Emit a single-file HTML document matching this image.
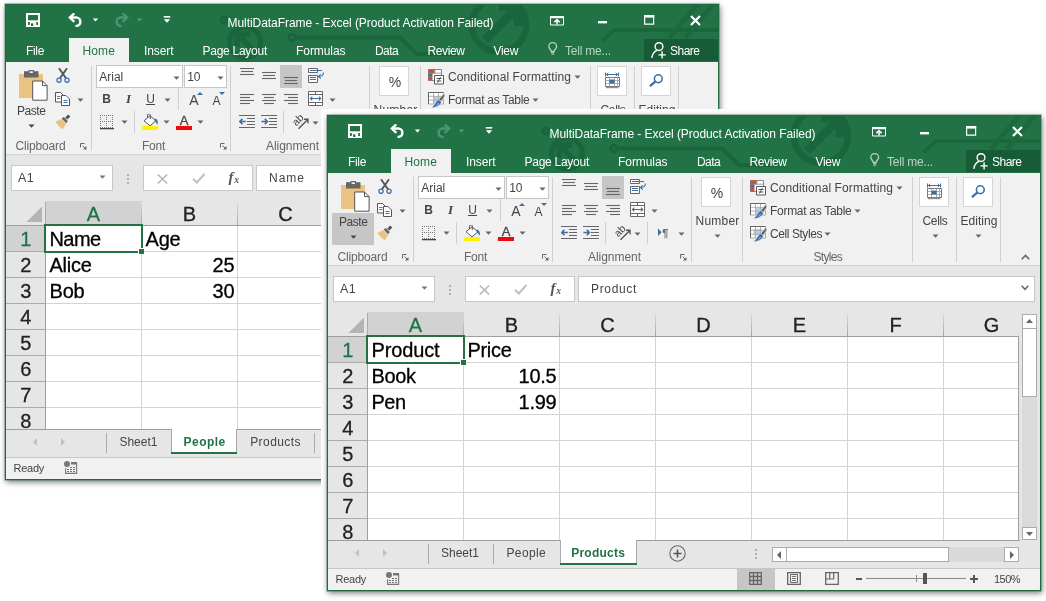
<!DOCTYPE html>
<html lang="en"><head><meta charset="utf-8"><title>MultiDataFrame - Excel</title>
<style>
html,body{margin:0;padding:0;background:#fff;}
body{width:1046px;height:601px;position:relative;overflow:hidden;}
.win{position:absolute;width:714px;height:476px;overflow:hidden;will-change:transform;}
.sh{position:absolute;width:714px;height:476px;box-shadow:0 0 0 1px rgba(40,105,70,.3),1px 2px 6px 0 rgba(0,0,0,.55);}
.win i,.win span,.win svg{position:absolute;display:block;}
.win .t{font-family:"Liberation Sans","DejaVu Sans",sans-serif;white-space:nowrap;}
.win .a{font-family:"Liberation Sans",sans-serif;white-space:nowrap;-webkit-text-stroke:.3px currentColor;}
.win .s{font-family:"Liberation Serif",serif;white-space:nowrap;}
.win .c{text-align:center;}
.bd{position:absolute;left:0;top:0;width:712px;height:474px;border:1px solid #1f6a40;pointer-events:none;}
#patch{position:absolute;left:321px;top:109px;width:725px;height:492px;background:#fff;overflow:hidden;}
</style></head><body>
<div class="sh" style="left:5px;top:4px"></div>
<div class="win" style="left:5px;top:4px"><i style="left:0px;top:0px;width:714px;height:58px;background:#217346;"></i>
<svg style="left:0px;top:0px" width="714" height="58" viewBox="0 0 714 58"><g fill="none" stroke="#1b653c"><circle cx="240" cy="38.500" r="15.500" stroke-width="5"/><path d="M250 48L233 31M232 43V30h13" stroke-width="5.500"/><circle cx="219" cy="16" r="3" stroke-width="3"/><circle cx="287" cy="33.500" r="3.200" stroke-width="3"/><path d="M290.500 33.500H395L412 50H452" stroke-width="4"/><circle cx="494" cy="21" r="27" stroke-width="6.500"/><path d="M480 36L511 5M494 3h19v19" stroke-width="8.500"/><path d="M597 37L609 26H713" stroke-width="3.500"/><path d="M693 0L664 34M708 0L680 34" stroke-width="5" stroke="#1d683e"/></g></svg>
<i style="left:64px;top:34px;width:60px;height:24px;background:#f1f1f1;"></i>
<i style="left:639px;top:35px;width:74px;height:22px;background:#185c37;"></i>
<svg style="left:21px;top:9px" width="14" height="14" viewBox="0 0 14 14"><path d="M1 1h12v12H1z" fill="none" stroke="#fff" stroke-width="2"/><path d="M1 7.300h12V9H1z" fill="#fff"/><path d="M3.800 9h6.400v4H3.800z" fill="#fff"/><path d="M5 10.300h2.300V13H5z" fill="#217346"/></svg>
<svg style="left:63px;top:9px" width="16" height="14" viewBox="0 0 16 14"><path d="M2 4.5h7a4.3 4.3 0 0 1 0 8.4H7.5" fill="none" stroke="#fff" stroke-width="2.3"/><path d="M6.3 0.3L1.8 4.6 6.3 8.9" fill="none" stroke="#fff" stroke-width="2.3"/></svg>
<svg style="left:86.5px;top:13.5px" width="7" height="4" viewBox="0 0 7 4"><path d="M0.80 0.500h5.4L3.500 3.50z" fill="#fff"/></svg>
<svg style="left:108px;top:9px" width="16" height="14" viewBox="0 0 16 14"><path d="M14 4.5H7a4.3 4.3 0 0 0 0 8.4h1.5" fill="none" stroke="#4f9470" stroke-width="2.3"/><path d="M9.7 0.3l4.5 4.3-4.5 4.3" fill="none" stroke="#4f9470" stroke-width="2.3"/></svg>
<svg style="left:130.5px;top:13.5px" width="7" height="4" viewBox="0 0 7 4"><path d="M0.80 0.500h5.4L3.500 3.50z" fill="#5a9a76"/></svg>
<svg style="left:158px;top:12px" width="8" height="8" viewBox="0 0 8 8"><path d="M0.800 0h6.400v1.600h-6.400z" fill="#fff"/><path d="M0.800 3.300h6.400L4 6.800z" fill="#fff"/></svg>
<span class="t" style="left:222.50px;top:11.00px;font-size:12px;line-height:16px;color:#fff;letter-spacing:-0.055px;">MultiDataFrame - Excel (Product Activation Failed)</span>
<svg style="left:545px;top:11.5px" width="14" height="10" viewBox="0 0 14 10"><path d="M0.500 0.500h13v8.500h-13z" fill="none" stroke="#fff"/><path d="M0 0h14v2.200H0z" fill="#fff"/><path d="M7 4v4.500M4.300 6.300l2.700-2.700L9.700 6.300" fill="none" stroke="#fff" stroke-width="1.500"/></svg>
<svg style="left:593px;top:17px" width="9" height="3" viewBox="0 0 9 3"><path d="M0 0h9v2.4H0z" fill="#fff"/></svg>
<svg style="left:638.5px;top:11px" width="11" height="10" viewBox="0 0 11 10"><path d="M0.6 0.6h9v8.6h-9z" fill="none" stroke="#fff" stroke-width="1.2"/><path d="M0 0h10.2v2.6H0z" fill="#fff"/></svg>
<svg style="left:685px;top:11px" width="11" height="11" viewBox="0 0 11 11"><path d="M1 1l9 9M10 1l-9 9" stroke="#fff" stroke-width="2.2" fill="none"/></svg>
<span class="t" style="left:21.00px;top:38.80px;font-size:12px;line-height:16px;color:#fff;letter-spacing:-0.336px;">File</span>
<span class="t" style="left:77.50px;top:38.80px;font-size:12px;line-height:16px;color:#217346;letter-spacing:0.121px;">Home</span>
<span class="t" style="left:139.00px;top:38.80px;font-size:12px;line-height:16px;color:#fff;letter-spacing:-0.086px;">Insert</span>
<span class="t" style="left:197.50px;top:38.80px;font-size:12px;line-height:16px;color:#fff;letter-spacing:-0.263px;">Page Layout</span>
<span class="t" style="left:291.00px;top:38.80px;font-size:12px;line-height:16px;color:#fff;letter-spacing:-0.064px;">Formulas</span>
<span class="t" style="left:370.00px;top:38.80px;font-size:12px;line-height:16px;color:#fff;letter-spacing:-0.590px;">Data</span>
<span class="t" style="left:422.50px;top:38.80px;font-size:12px;line-height:16px;color:#fff;letter-spacing:-0.393px;">Review</span>
<span class="t" style="left:488.50px;top:38.80px;font-size:12px;line-height:16px;color:#fff;letter-spacing:-0.324px;">View</span>
<span class="t" style="left:560.00px;top:38.80px;font-size:12px;line-height:16px;color:#b5d6c3;letter-spacing:-0.202px;">Tell me...</span>
<span class="t" style="left:665.00px;top:38.80px;font-size:12px;line-height:16px;color:#fff;letter-spacing:-0.506px;">Share</span>
<svg style="left:543px;top:38px" width="10" height="13" viewBox="0 0 10 13"><path d="M3.300 9.400C3.100 7.600 0.800 6.700 0.800 4.400a3.900 3.900 0 0 1 7.800 0c0 2.300-2.300 3.200-2.500 5z" fill="none" stroke="#a9cfb9" stroke-width="1.400"/><path d="M3 10.400h3.400M3.300 12.100h2.800" stroke="#a9cfb9" stroke-width="1.200"/></svg>
<svg style="left:646px;top:38px" width="16" height="17" viewBox="0 0 16 17"><circle cx="8" cy="4.6" r="3.9" fill="none" stroke="#fff" stroke-width="1.4"/><path d="M0.8 15.8C1.6 11.4 3.8 9.2 6 8.4" fill="none" stroke="#fff" stroke-width="1.4"/><path d="M7.5 12.9h7.2M11.1 9.3v7.2" stroke="#fff" stroke-width="1.4"/></svg>
<i style="left:1px;top:58px;width:712px;height:92px;background:#f1f1f1;"></i>
<i style="left:1px;top:150px;width:712px;height:1px;background:#d2d2d2;"></i>
<i style="left:86px;top:62px;width:1px;height:85px;background:#d0d0d0;"></i>
<i style="left:225px;top:62px;width:1px;height:85px;background:#d0d0d0;"></i>
<i style="left:364px;top:62px;width:1px;height:85px;background:#d0d0d0;"></i>
<i style="left:415px;top:62px;width:1px;height:85px;background:#d0d0d0;"></i>
<i style="left:585px;top:62px;width:1px;height:85px;background:#d0d0d0;"></i>
<i style="left:629px;top:62px;width:1px;height:85px;background:#d0d0d0;"></i>
<i style="left:673px;top:62px;width:1px;height:85px;background:#d0d0d0;"></i>
<i style="left:173px;top:84px;width:1px;height:22px;background:#d0d0d0;"></i>
<i style="left:129px;top:107px;width:1px;height:22px;background:#d0d0d0;"></i>
<i style="left:278px;top:107px;width:1px;height:22px;background:#d0d0d0;"></i>
<i style="left:320px;top:107px;width:1px;height:22px;background:#d0d0d0;"></i>
<svg style="left:13px;top:66px" width="31" height="32" viewBox="0 0 31 32"><path d="M1 4h24v24H1z" fill="#eac282"/><path d="M6 1.2h14.5V7.5H6z" fill="#666"/><path d="M10.5 0h5.5v3.2h-5.5z" fill="#666"/><path d="M11.6 1.3h3.3v1.7h-3.3z" fill="#f1f1f1"/><path d="M14.7 11h9.8l4.6 4.6v14.6H14.7z" fill="#fff" stroke="#555" stroke-width="1"/><path d="M24.5 11v4.6h4.6" fill="none" stroke="#555" stroke-width="1"/></svg>
<span class="t" style="left:12.00px;top:99.00px;font-size:12px;line-height:16px;color:#444;letter-spacing:-0.438px;">Paste</span>
<svg style="left:22.5px;top:120px" width="7" height="4" viewBox="0 0 7 4"><path d="M0.50 0.500h6L3.500 3.80z" fill="#444"/></svg>
<svg style="left:51px;top:64px" width="14" height="15" viewBox="0 0 14 15"><path d="M3 0.300L10 10.200M11 0.300L4 10.200" stroke="#555" stroke-width="1.900" fill="none"/><circle cx="3" cy="12.300" r="2.100" fill="none" stroke="#3a6ea5" stroke-width="1.300"/><circle cx="11" cy="12.300" r="2.100" fill="none" stroke="#3a6ea5" stroke-width="1.300"/></svg>
<svg style="left:50px;top:88px" width="15" height="14" viewBox="0 0 15 14"><path d="M0.500 0.500h5l2.500 2.500v7h-7.500z" fill="#fff" stroke="#555"/><path d="M2 4.500h3.500M2 6.500h3.500" stroke="#666" stroke-width=".9"/><path d="M6.500 3.500h4.500l3.500 3.500v6.500h-8z" fill="#fff" stroke="#555"/><path d="M8.500 8.500h4M8.500 10.500h4" stroke="#3a6ea5" stroke-width="1"/></svg>
<svg style="left:71.5px;top:93.5px" width="7" height="4" viewBox="0 0 7 4"><path d="M0.50 0.500h6L3.500 3.80z" fill="#666"/></svg>
<svg style="left:50px;top:110px" width="16" height="16" viewBox="0 0 16 16"><path d="M10.2 3.4l3-3 2.2 2.2-3 3z" fill="#555"/><path d="M6.6 4.6l2.2-1.6 4 4-1.6 2.2z" fill="#666"/><path d="M0.4 8l5.8-3 5 5-3.6 5.6C5 13.400 2.600 10.800 0.400 8z" fill="#eac282"/></svg>
<span class="t" style="left:10.50px;top:134.00px;font-size:12px;line-height:16px;color:#666;letter-spacing:-0.153px;">Clipboard</span>
<svg style="left:75px;top:139px" width="7" height="7" viewBox="0 0 7 7"><path d="M0.5 4.5v-4h4" fill="none" stroke="#666"/><path d="M2.6 2.6l3.4 3.4" stroke="#666" stroke-width="1"/><path d="M6.5 3v3.5H3z" fill="#666"/></svg>
<i style="left:91px;top:61px;width:87px;height:23px;background:#fff;border:1px solid #c6c6c6;box-sizing:border-box;"></i>
<i style="left:179px;top:61px;width:43px;height:23px;background:#fff;border:1px solid #c6c6c6;box-sizing:border-box;"></i>
<span class="t" style="left:94.30px;top:65.00px;font-size:12px;line-height:16px;color:#444;letter-spacing:-0.003px;">Arial</span>
<svg style="left:167.5px;top:71.5px" width="7" height="4" viewBox="0 0 7 4"><path d="M0.50 0.500h6L3.500 3.80z" fill="#666"/></svg>
<span class="t" style="left:182.30px;top:65.00px;font-size:12px;line-height:16px;color:#444;letter-spacing:-0.330px;">10</span>
<svg style="left:211.5px;top:71.5px" width="7" height="4" viewBox="0 0 7 4"><path d="M0.50 0.500h6L3.500 3.80z" fill="#666"/></svg>
<span class="t c" style="left:41.50px;width:120px;top:86.50px;font-size:12px;line-height:16px;color:#444;font-weight:bold;">B</span>
<span class="s c" style="left:63.50px;width:120px;top:86.00px;font-size:13px;line-height:17px;color:#444;font-weight:bold;font-style:italic;">I</span>
<span class="t c" style="left:85.50px;width:120px;top:86.50px;font-size:12px;line-height:16px;color:#444;">U</span>
<i style="left:141px;top:100px;width:9px;height:1px;background:#444;"></i>
<svg style="left:159.0px;top:94px" width="7" height="4" viewBox="0 0 7 4"><path d="M0.50 0.500h6L3.500 3.80z" fill="#666"/></svg>
<span class="t c" style="left:129.00px;width:120px;top:87.00px;font-size:14px;line-height:18px;color:#444;">A</span>
<span class="t c" style="left:151.50px;width:120px;top:88.50px;font-size:12px;line-height:16px;color:#444;">A</span>
<svg style="left:191.5px;top:88px" width="6" height="3" viewBox="0 0 6 3"><path d="M0 3h6L3 0z" fill="#3a6ea5"/></svg>
<svg style="left:213.5px;top:88px" width="6" height="3" viewBox="0 0 6 3"><path d="M0 0h6L3 3z" fill="#3a6ea5"/></svg>
<svg style="left:95px;top:111px" width="14" height="15" viewBox="0 0 14 15"><path d="M0 0h1v1h-1zM0 0h1v1h-1zM0 6h1v1h-1zM6 0h1v1h-1zM0 12h1v1h-1zM12 0h1v1h-1zM2 0h1v1h-1zM0 2h1v1h-1zM2 6h1v1h-1zM6 2h1v1h-1zM2 12h1v1h-1zM12 2h1v1h-1zM4 0h1v1h-1zM0 4h1v1h-1zM4 6h1v1h-1zM6 4h1v1h-1zM4 12h1v1h-1zM12 4h1v1h-1zM6 0h1v1h-1zM0 6h1v1h-1zM6 6h1v1h-1zM6 6h1v1h-1zM6 12h1v1h-1zM12 6h1v1h-1zM8 0h1v1h-1zM0 8h1v1h-1zM8 6h1v1h-1zM6 8h1v1h-1zM8 12h1v1h-1zM12 8h1v1h-1zM10 0h1v1h-1zM0 10h1v1h-1zM10 6h1v1h-1zM6 10h1v1h-1zM10 12h1v1h-1zM12 10h1v1h-1zM12 0h1v1h-1zM0 12h1v1h-1zM12 6h1v1h-1zM6 12h1v1h-1zM12 12h1v1h-1zM12 12h1v1h-1z" fill="#777"/><path d="M0 13h14v1.300H0z" fill="#444"/></svg>
<svg style="left:115.5px;top:116px" width="7" height="4" viewBox="0 0 7 4"><path d="M0.50 0.500h6L3.500 3.80z" fill="#666"/></svg>
<svg style="left:138px;top:110px" width="16" height="13" viewBox="0 0 16 13"><path d="M7 1.800L13 6.800 7 11.800 1 6.800z" fill="#fff" stroke="#555" stroke-width="1"/><path d="M4.500 4V1.200a1.400 1.400 0 0 1 2.800 0v4" fill="none" stroke="#555" stroke-width="1"/><path d="M12 4.600c2.300.8 3.500 3 2.600 6.200-1.300-1.400-1.700-3.200-3.400-4.600z" fill="#3a6ea5"/></svg>
<i style="left:137px;top:122px;width:16px;height:4px;background:#fff200;"></i>
<svg style="left:158.0px;top:116px" width="7" height="4" viewBox="0 0 7 4"><path d="M0.50 0.500h6L3.500 3.80z" fill="#666"/></svg>
<span class="t c" style="left:119.20px;width:120px;top:108.00px;font-size:13px;line-height:17px;color:#444;-webkit-text-stroke:.3px #444;">A</span>
<i style="left:171px;top:122px;width:16px;height:4px;background:#ee0a0a;"></i>
<svg style="left:192.0px;top:116px" width="7" height="4" viewBox="0 0 7 4"><path d="M0.50 0.500h6L3.500 3.80z" fill="#666"/></svg>
<span class="t" style="left:137.00px;top:134.00px;font-size:12px;line-height:16px;color:#666;letter-spacing:-0.254px;">Font</span>
<svg style="left:215px;top:139px" width="7" height="7" viewBox="0 0 7 7"><path d="M0.5 4.5v-4h4" fill="none" stroke="#666"/><path d="M2.6 2.6l3.4 3.4" stroke="#666" stroke-width="1"/><path d="M6.5 3v3.5H3z" fill="#666"/></svg>
<i style="left:275px;top:61px;width:22px;height:23px;background:#c6c6c6;"></i>
<svg style="left:235px;top:64px" width="14" height="17" viewBox="0 0 14 17"><path d="M0 0.5h14" stroke="#666" stroke-width="1.100"/><path d="M1 3.5h12" stroke="#666" stroke-width="1.100"/><path d="M0 6.5h14" stroke="#666" stroke-width="1.100"/></svg>
<svg style="left:257px;top:64px" width="14" height="17" viewBox="0 0 14 17"><path d="M0 4.5h14" stroke="#666" stroke-width="1.100"/><path d="M1 7.5h12" stroke="#666" stroke-width="1.100"/><path d="M0 10.5h14" stroke="#666" stroke-width="1.100"/></svg>
<svg style="left:279px;top:64px" width="14" height="17" viewBox="0 0 14 17"><path d="M0 9.5h14" stroke="#666" stroke-width="1.100"/><path d="M1 12.5h12" stroke="#666" stroke-width="1.100"/><path d="M0 15.5h14" stroke="#666" stroke-width="1.100"/></svg>
<svg style="left:303px;top:64px" width="17" height="16" viewBox="0 0 17 16"><path d="M0.500 0.500h9v4h-9z" fill="#fff" stroke="#666"/><path d="M2 2.500h12" stroke="#3a6ea5" stroke-width="1"/><path d="M0.500 7.500h9v7h-9z" fill="#fff" stroke="#666"/><path d="M2 9.500h6M2 11.500h6" stroke="#3a6ea5" stroke-width="1"/><path d="M15.300 4.500c.4 2.600-1.400 3.900-4.300 3.900" fill="none" stroke="#3a6ea5" stroke-width="1.100"/><path d="M12.700 6.300L10.500 8.400l2.200 2.100" fill="none" stroke="#3a6ea5" stroke-width="1.100"/></svg>
<svg style="left:235px;top:88px" width="14" height="14" viewBox="0 0 14 14"><path d="M0 2.5h14" stroke="#666" stroke-width="1.1"/><path d="M0 5.5h10" stroke="#666" stroke-width="1.1"/><path d="M0 8.5h14" stroke="#666" stroke-width="1.1"/><path d="M0 11.5h10" stroke="#666" stroke-width="1.1"/></svg>
<svg style="left:257px;top:88px" width="14" height="14" viewBox="0 0 14 14"><path d="M0 2.5h14" stroke="#666" stroke-width="1.1"/><path d="M2 5.5h10" stroke="#666" stroke-width="1.1"/><path d="M0 8.5h14" stroke="#666" stroke-width="1.1"/><path d="M2 11.5h10" stroke="#666" stroke-width="1.1"/></svg>
<svg style="left:279px;top:88px" width="14" height="14" viewBox="0 0 14 14"><path d="M0 2.5h14" stroke="#666" stroke-width="1.1"/><path d="M4 5.5h10" stroke="#666" stroke-width="1.1"/><path d="M0 8.5h14" stroke="#666" stroke-width="1.1"/><path d="M4 11.5h10" stroke="#666" stroke-width="1.1"/></svg>
<svg style="left:303px;top:87px" width="16" height="16" viewBox="0 0 16 16"><path d="M0.500 0.500h14v14h-14z" fill="#fff" stroke="#666"/><path d="M0.500 3.500h14M0.500 11.500h14M7.500 0.500v3M7.500 11.500v3" stroke="#666" fill="none"/><path d="M2.500 7.500h10.200M4.300 5.700L2.500 7.500l1.800 1.800M10.900 5.700L12.700 7.500l-1.800 1.800" fill="none" stroke="#3a6ea5" stroke-width="1.100"/></svg>
<svg style="left:324.0px;top:94px" width="7" height="4" viewBox="0 0 7 4"><path d="M0.50 0.500h6L3.500 3.80z" fill="#666"/></svg>
<svg style="left:234px;top:111px" width="16" height="14" viewBox="0 0 16 14"><path d="M0 0.500h16M0 12.500h16M8 3.500h8M8 6.500h8M8 9.500h8" stroke="#666" stroke-width="1.1"/><path d="M0.800 6.500h6M3.400 3.800L0.800 6.500l2.600 2.700" fill="none" stroke="#3a6ea5" stroke-width="1.6"/></svg>
<svg style="left:256px;top:111px" width="16" height="14" viewBox="0 0 16 14"><path d="M0 0.500h16M0 12.500h16M8 3.500h8M8 6.500h8M8 9.500h8" stroke="#666" stroke-width="1.1"/><path d="M0.400 6.500h6M3.800 3.800L6.400 6.500 3.800 9.200" fill="none" stroke="#3a6ea5" stroke-width="1.6"/></svg>
<svg style="left:287px;top:111px" width="18" height="16" viewBox="0 0 18 16"><text x="0" y="0" transform="translate(4.200 11.500) rotate(-45)" font-family="Liberation Sans,sans-serif" font-size="10.500" fill="#444">ab</text><path d="M6.500 13.800L15.500 4.800" stroke="#555" stroke-width="1.400"/><path d="M12 4.300h4v4" fill="none" stroke="#555" stroke-width="1.400"/></svg>
<svg style="left:306.5px;top:116.5px" width="7" height="4" viewBox="0 0 7 4"><path d="M0.50 0.500h6L3.500 3.80z" fill="#666"/></svg>
<svg style="left:331px;top:113px" width="13" height="11" viewBox="0 0 13 11"><path d="M0 0.500l3.600 3.700L0 8z" fill="#3a6ea5"/><text x="4.200" y="8.600" font-family="Liberation Sans,sans-serif" font-size="11" font-weight="bold" fill="#666">¶</text></svg>
<svg style="left:350.5px;top:116.5px" width="7" height="4" viewBox="0 0 7 4"><path d="M0.50 0.500h6L3.500 3.80z" fill="#666"/></svg>
<span class="t" style="left:261.00px;top:134.00px;font-size:12px;line-height:16px;color:#666;letter-spacing:-0.042px;">Alignment</span>
<svg style="left:353px;top:139px" width="7" height="7" viewBox="0 0 7 7"><path d="M0.5 4.5v-4h4" fill="none" stroke="#666"/><path d="M2.6 2.6l3.4 3.4" stroke="#666" stroke-width="1"/><path d="M6.5 3v3.5H3z" fill="#666"/></svg>
<i style="left:374px;top:62px;width:30px;height:30px;background:#fff;border:1px solid #d4d4d4;box-sizing:border-box;"></i>
<span class="t c" style="left:330.00px;width:120px;top:68.50px;font-size:14px;line-height:18px;color:#444;">%</span>
<span class="t" style="left:368.50px;top:97.50px;font-size:12px;line-height:16px;color:#444;letter-spacing:0.219px;">Number</span>
<svg style="left:387.0px;top:118.5px" width="7" height="4" viewBox="0 0 7 4"><path d="M0.50 0.500h6L3.500 3.80z" fill="#666"/></svg>
<svg style="left:423px;top:65px" width="16" height="16" viewBox="0 0 16 16"><path d="M0.500 0.500h13v11h-13z" fill="#fff" stroke="#888"/><path d="M0.500 0.500h6v3.700h-6z" fill="#c8502f"/><path d="M0.500 4.200h4v3.600h-4z" fill="#3a6ea5"/><path d="M0.500 7.800h4v3.700h-4z" fill="#c8502f"/><path d="M7 0.500v4M0.500 4.200h13" stroke="#888" stroke-width=".8" fill="none"/><path d="M6.500 6.500h9v8.500h-9z" fill="#fff" stroke="#555"/><path d="M8.500 9.500h5M8.500 12h5M12.500 8l-3 5.500" stroke="#444" stroke-width=".9" fill="none"/></svg>
<svg style="left:423px;top:88px" width="18" height="16" viewBox="0 0 18 16"><path d="M0.500 0.500h15v11.500h-15z" fill="#fff" stroke="#aaa"/><path d="M5.500 4.300h5v7.700h-5zM10.500 4.300h5v3.900h-5z" fill="#b9cde5"/><path d="M0.500 4.300h15M0.500 8.200h15M5.500 0.500v11.500M10.500 0.500v11.500" stroke="#aaa" stroke-width=".9" fill="none"/><path d="M0.500 12V0.500H15.500" fill="none" stroke="#666" stroke-width="1"/><path d="M16.200 1.100L17 4 13.200 9.600 10.600 7.400z" fill="#666" stroke="#f1f1f1" stroke-width=".7"/><path d="M10.700 7.600L13.500 10C12.200 13.600 8 15.600 3.500 15.700 6.500 14 7.400 9.400 10.700 7.600z" fill="#3a6ea5" stroke="#f1f1f1" stroke-width=".5"/><path d="M8.500 13.300c1-.6 1.700-1.400 2.100-2.400" stroke="#cfe0f2" stroke-width=".8" fill="none"/></svg>
<svg style="left:423px;top:111px" width="18" height="16" viewBox="0 0 18 16"><path d="M0.500 0.500h15v11.500h-15z" fill="#fff" stroke="#aaa"/><path d="M3.500 3h8.500v6.500H3.500z" fill="#b9cde5"/><path d="M0.500 4.300h15M0.500 8.200h15M5.500 0.500v11.500M10.500 0.500v11.500" stroke="#aaa" stroke-width=".9" fill="none"/><path d="M0.500 12V0.500H15.500" fill="none" stroke="#666" stroke-width="1"/><path d="M16.200 1.100L17 4 13.200 9.600 10.600 7.400z" fill="#666" stroke="#f1f1f1" stroke-width=".7"/><path d="M10.700 7.600L13.500 10C12.200 13.600 8 15.600 3.500 15.700 6.500 14 7.400 9.400 10.700 7.600z" fill="#3a6ea5" stroke="#f1f1f1" stroke-width=".5"/><path d="M8.500 13.300c1-.6 1.700-1.400 2.100-2.400" stroke="#cfe0f2" stroke-width=".8" fill="none"/></svg>
<span class="t" style="left:443.00px;top:64.50px;font-size:12px;line-height:16px;color:#444;letter-spacing:0.103px;">Conditional Formatting</span>
<svg style="left:568.5px;top:71px" width="7" height="4" viewBox="0 0 7 4"><path d="M0.50 0.500h6L3.500 3.80z" fill="#666"/></svg>
<span class="t" style="left:443.00px;top:87.50px;font-size:12px;line-height:16px;color:#444;letter-spacing:-0.289px;">Format as Table</span>
<svg style="left:526.5px;top:94px" width="7" height="4" viewBox="0 0 7 4"><path d="M0.50 0.500h6L3.500 3.80z" fill="#666"/></svg>
<span class="t" style="left:443.00px;top:111.00px;font-size:12px;line-height:16px;color:#444;letter-spacing:-0.426px;">Cell Styles</span>
<svg style="left:496.5px;top:116.5px" width="7" height="4" viewBox="0 0 7 4"><path d="M0.50 0.500h6L3.500 3.80z" fill="#666"/></svg>
<span class="t" style="left:486.50px;top:134.00px;font-size:12px;line-height:16px;color:#666;letter-spacing:-0.698px;">Styles</span>
<i style="left:592px;top:62px;width:30px;height:30px;background:#fff;border:1px solid #d4d4d4;box-sizing:border-box;"></i>
<svg style="left:600px;top:68px" width="15" height="17" viewBox="0 0 15 17"><path d="M0.500 0.500v4M13.500 0.500v4M1 2.500h12M3.300 0.800L1.500 2.500l1.800 1.700M10.700 0.800L12.500 2.500l-1.800 1.700" fill="none" stroke="#3a6ea5" stroke-width="1"/><path d="M0.500 5.500h14v9h-14z" fill="#fff" stroke="#777"/><path d="M0.500 8.500h14M0.500 11.500h14M4.500 5.500v9M9.500 5.500v9M12.500 5.500v9" stroke="#999" stroke-width=".8" fill="none"/><path d="M4.500 7.500h5v4h-5z" fill="#3a6ea5"/><path d="M1 15.700h5.500v-1M7.500 14.700v1h6" stroke="#777" stroke-width="1" fill="none"/></svg>
<span class="t" style="left:595.50px;top:97.50px;font-size:12px;line-height:16px;color:#444;letter-spacing:-0.334px;">Cells</span>
<svg style="left:604.5px;top:118.5px" width="7" height="4" viewBox="0 0 7 4"><path d="M0.50 0.500h6L3.500 3.80z" fill="#666"/></svg>
<i style="left:636px;top:62px;width:30px;height:30px;background:#fff;border:1px solid #d4d4d4;box-sizing:border-box;"></i>
<svg style="left:644px;top:70px" width="14" height="13" viewBox="0 0 14 13"><circle cx="9.300" cy="4.700" r="3.900" fill="#fff" stroke="#3a6ea5" stroke-width="1.600"/><path d="M6.300 7.700L0.900 12.200" stroke="#3a6ea5" stroke-width="2.200"/></svg>
<span class="t" style="left:633.50px;top:97.50px;font-size:12px;line-height:16px;color:#444;letter-spacing:0.042px;">Editing</span>
<svg style="left:648.0px;top:118.5px" width="7" height="4" viewBox="0 0 7 4"><path d="M0.50 0.500h6L3.500 3.80z" fill="#666"/></svg>
<svg style="left:694px;top:139px" width="9" height="6" viewBox="0 0 9 6"><path d="M0.700 5.300L4.500 1.400 8.300 5.300" fill="none" stroke="#666" stroke-width="1.600"/></svg>
<i style="left:1px;top:151px;width:712px;height:46px;background:#e6e6e6;"></i>
<i style="left:6px;top:161px;width:102px;height:26px;background:#fff;border:1px solid #c8c8c8;box-sizing:border-box;"></i>
<span class="t" style="left:13.00px;top:166.25px;font-size:12.5px;line-height:16.5px;color:#444;letter-spacing:0.352px;">A1</span>
<svg style="left:94.0px;top:171px" width="7" height="4" viewBox="0 0 7 4"><path d="M0.50 0.500h6L3.500 3.80z" fill="#777"/></svg>
<svg style="left:122px;top:169.5px" width="2" height="10" viewBox="0 0 2 10"><path d="M0 0h2v2H0zM0 4h2v2H0zM0 8h2v2H0z" fill="#b0b0b0"/></svg>
<i style="left:138px;top:161px;width:110px;height:26px;background:#fff;border:1px solid #c8c8c8;box-sizing:border-box;"></i>
<svg style="left:151.5px;top:169.5px" width="11" height="10" viewBox="0 0 11 10"><path d="M0.800 0.500l9.400 9M10.200 0.500L0.800 9.500" stroke="#b5b5b5" stroke-width="1.500" fill="none"/></svg>
<svg style="left:187px;top:169px" width="14" height="11" viewBox="0 0 14 11"><path d="M1 5.800l3.800 3.700L12.500 1" stroke="#c2c2c2" stroke-width="2.200" fill="none"/></svg>
<svg style="left:222px;top:166px" width="15" height="17" viewBox="0 0 15 17"><text x="1.500" y="12" font-family="Liberation Serif,serif" font-style="italic" font-weight="bold" font-size="15" fill="#555">f</text><text x="7.200" y="12.500" font-family="Liberation Serif,serif" font-style="italic" font-weight="bold" font-size="9.500" fill="#555">x</text></svg>
<i style="left:251px;top:161px;width:457px;height:26px;background:#fff;border:1px solid #c8c8c8;box-sizing:border-box;"></i>
<span class="t" style="left:264.00px;top:166.00px;font-size:12px;line-height:16px;color:#444;letter-spacing:0.996px;">Name</span>
<svg style="left:694px;top:170px" width="8" height="6" viewBox="0 0 8 6"><path d="M0.700 0.800L4 4.300 7.300 0.800" fill="none" stroke="#666" stroke-width="1.500"/></svg>
<i style="left:1px;top:197px;width:712px;height:228px;background:#e6e6e6;"></i>
<i style="left:41px;top:221px;width:651px;height:204px;background:#fff;"></i>
<i style="left:40px;top:197px;width:97px;height:24px;background:#d2d2d2;"></i>
<i style="left:1px;top:221px;width:39px;height:26px;background:#d2d2d2;"></i>
<svg style="left:20.5px;top:201.5px" width="16.5" height="16.5" viewBox="0 0 16.5 16.5"><path d="M16.500 0v16.500H0z" fill="#b4b4b4"/></svg>
<span class="a c" style="left:28.50px;width:120px;top:198.00px;font-size:20px;line-height:24px;color:#217346;">A</span>
<span class="a c" style="left:124.50px;width:120px;top:198.00px;font-size:20px;line-height:24px;color:#222;">B</span>
<span class="a c" style="left:220.50px;width:120px;top:198.00px;font-size:20px;line-height:24px;color:#222;">C</span>
<span class="a c" style="left:316.50px;width:120px;top:198.00px;font-size:20px;line-height:24px;color:#222;">D</span>
<span class="a c" style="left:412.50px;width:120px;top:198.00px;font-size:20px;line-height:24px;color:#222;">E</span>
<span class="a c" style="left:508.50px;width:120px;top:198.00px;font-size:20px;line-height:24px;color:#222;">F</span>
<span class="a c" style="left:604.50px;width:120px;top:198.00px;font-size:20px;line-height:24px;color:#222;">G</span>
<span class="a c" style="left:-39.20px;width:120px;top:222.50px;font-size:20px;line-height:24px;color:#217346;">1</span>
<span class="a c" style="left:-39.20px;width:120px;top:248.50px;font-size:20px;line-height:24px;color:#222;">2</span>
<span class="a c" style="left:-39.20px;width:120px;top:274.50px;font-size:20px;line-height:24px;color:#222;">3</span>
<span class="a c" style="left:-39.20px;width:120px;top:300.50px;font-size:20px;line-height:24px;color:#222;">4</span>
<span class="a c" style="left:-39.20px;width:120px;top:326.50px;font-size:20px;line-height:24px;color:#222;">5</span>
<span class="a c" style="left:-39.20px;width:120px;top:352.50px;font-size:20px;line-height:24px;color:#222;">6</span>
<span class="a c" style="left:-39.20px;width:120px;top:378.50px;font-size:20px;line-height:24px;color:#222;">7</span>
<span class="a c" style="left:-39.20px;width:120px;top:404.50px;font-size:20px;line-height:24px;color:#222;">8</span>
<i style="left:40px;top:221px;width:1px;height:204px;background:#d4d4d4;"></i>
<i style="left:40px;top:198px;width:1px;height:23px;background:#ababab;"></i>
<i style="left:136px;top:221px;width:1px;height:204px;background:#d4d4d4;"></i>
<i style="left:136px;top:198px;width:1px;height:23px;background:linear-gradient(#dcdcdc,#a6a6a6);"></i>
<i style="left:232px;top:221px;width:1px;height:204px;background:#d4d4d4;"></i>
<i style="left:232px;top:198px;width:1px;height:23px;background:linear-gradient(#dcdcdc,#a6a6a6);"></i>
<i style="left:328px;top:221px;width:1px;height:204px;background:#d4d4d4;"></i>
<i style="left:328px;top:198px;width:1px;height:23px;background:linear-gradient(#dcdcdc,#a6a6a6);"></i>
<i style="left:424px;top:221px;width:1px;height:204px;background:#d4d4d4;"></i>
<i style="left:424px;top:198px;width:1px;height:23px;background:linear-gradient(#dcdcdc,#a6a6a6);"></i>
<i style="left:520px;top:221px;width:1px;height:204px;background:#d4d4d4;"></i>
<i style="left:520px;top:198px;width:1px;height:23px;background:linear-gradient(#dcdcdc,#a6a6a6);"></i>
<i style="left:616px;top:221px;width:1px;height:204px;background:#d4d4d4;"></i>
<i style="left:616px;top:198px;width:1px;height:23px;background:linear-gradient(#dcdcdc,#a6a6a6);"></i>
<i style="left:41px;top:247px;width:651px;height:1px;background:#d4d4d4;"></i>
<i style="left:1px;top:247px;width:39px;height:1px;background:#ababab;"></i>
<i style="left:41px;top:273px;width:651px;height:1px;background:#d4d4d4;"></i>
<i style="left:1px;top:273px;width:39px;height:1px;background:#ababab;"></i>
<i style="left:41px;top:299px;width:651px;height:1px;background:#d4d4d4;"></i>
<i style="left:1px;top:299px;width:39px;height:1px;background:#ababab;"></i>
<i style="left:41px;top:325px;width:651px;height:1px;background:#d4d4d4;"></i>
<i style="left:1px;top:325px;width:39px;height:1px;background:#ababab;"></i>
<i style="left:41px;top:351px;width:651px;height:1px;background:#d4d4d4;"></i>
<i style="left:1px;top:351px;width:39px;height:1px;background:#ababab;"></i>
<i style="left:41px;top:377px;width:651px;height:1px;background:#d4d4d4;"></i>
<i style="left:1px;top:377px;width:39px;height:1px;background:#ababab;"></i>
<i style="left:41px;top:403px;width:651px;height:1px;background:#d4d4d4;"></i>
<i style="left:1px;top:403px;width:39px;height:1px;background:#ababab;"></i>
<i style="left:1px;top:220.5px;width:691px;height:1.0px;background:#9e9e9e;"></i>
<i style="left:40px;top:221px;width:1px;height:204px;background:#9e9e9e;"></i>
<i style="left:691px;top:221px;width:1px;height:204px;background:#9e9e9e;"></i>
<span class="a" style="left:44.50px;top:223.00px;font-size:20px;line-height:24px;color:#000;letter-spacing:-0.590px;">Name</span>
<span class="a" style="left:140.50px;top:223.00px;font-size:20px;line-height:24px;color:#000;letter-spacing:-0.198px;">Age</span>
<span class="a" style="left:44.50px;top:249.00px;font-size:20px;line-height:24px;color:#000;letter-spacing:-0.272px;">Alice</span>
<span class="a" style="left:207.50px;top:249.00px;font-size:20px;line-height:24px;color:#000;letter-spacing:-0.125px;">25</span>
<span class="a" style="left:44.50px;top:275.00px;font-size:20px;line-height:24px;color:#000;letter-spacing:-0.198px;">Bob</span>
<span class="a" style="left:207.50px;top:275.00px;font-size:20px;line-height:24px;color:#000;letter-spacing:-0.125px;">30</span>
<i style="left:39px;top:220px;width:99px;height:29px;border:2px solid #217346;box-sizing:border-box;"></i>
<i style="left:133px;top:244px;width:6px;height:6px;background:#fff;"></i>
<i style="left:134px;top:245px;width:5px;height:5px;background:#217346;"></i>
<i style="left:695px;top:199px;width:15px;height:226px;background:#dadada;"></i>
<i style="left:695px;top:199px;width:15px;height:15px;background:#fff;border:1px solid #ababab;box-sizing:border-box;"></i>
<i style="left:695px;top:214px;width:15px;height:68px;background:#fff;border:1px solid #ababab;border-top:0;box-sizing:border-box;"></i>
<i style="left:695px;top:412px;width:15px;height:13px;background:#fff;border:1px solid #ababab;box-sizing:border-box;"></i>
<svg style="left:699px;top:204px" width="7" height="4" viewBox="0 0 7 4"><path d="M0 4h7L3.500 0z" fill="#666"/></svg>
<svg style="left:699px;top:417px" width="7" height="4" viewBox="0 0 7 4"><path d="M0 0h7L3.500 4z" fill="#666"/></svg>
<i style="left:1px;top:425px;width:712px;height:28px;background:#e6e6e6;"></i>
<i style="left:1px;top:424.5px;width:691.5px;height:1.0px;background:#9e9e9e;"></i>
<svg style="left:28px;top:434px" width="4" height="8" viewBox="0 0 4 8"><path d="M4 0v8L0 4z" fill="#c0c0c0"/></svg>
<svg style="left:56px;top:434px" width="4" height="8" viewBox="0 0 4 8"><path d="M0 0v8l4-4z" fill="#c0c0c0"/></svg>
<i style="left:101px;top:429px;width:1px;height:20px;background:#ababab;"></i>
<span class="t" style="left:114.40px;top:430.00px;font-size:12px;line-height:16px;color:#444;letter-spacing:-0.008px;">Sheet1</span>
<i style="left:166px;top:425px;width:66px;height:23px;background:#fff;border-left:1px solid #ababab;border-right:1px solid #ababab;box-sizing:border-box;"></i>
<i style="left:166px;top:448px;width:66px;height:2px;background:#217346;"></i>
<span class="t" style="left:178.60px;top:430.00px;font-size:12px;line-height:16px;color:#217346;font-weight:bold;letter-spacing:0.440px;">People</span>
<span class="t" style="left:245.20px;top:430.00px;font-size:12px;line-height:16px;color:#444;letter-spacing:0.430px;">Products</span>
<i style="left:309px;top:429px;width:1px;height:20px;background:#ababab;"></i>
<svg style="left:342px;top:430px" width="17" height="17" viewBox="0 0 17 17"><circle cx="8.500" cy="8.500" r="7.700" fill="none" stroke="#666" stroke-width="1.100"/><path d="M4.500 8.500h8M8.500 4.500v8" stroke="#555" stroke-width="1.600"/></svg>
<svg style="left:428px;top:434px" width="2" height="10" viewBox="0 0 2 10"><path d="M0 0h2v2H0zM0 4h2v2H0zM0 8h2v2H0z" fill="#b0b0b0"/></svg>
<i style="left:445px;top:432px;width:15px;height:15px;background:#fff;border:1px solid #ababab;box-sizing:border-box;"></i>
<i style="left:460px;top:432px;width:162px;height:15px;background:#fff;border:1px solid #ababab;border-left:0;box-sizing:border-box;"></i>
<i style="left:622px;top:432px;width:56px;height:15px;background:#d9d9d9;"></i>
<i style="left:677px;top:432px;width:15px;height:15px;background:#fff;border:1px solid #ababab;box-sizing:border-box;"></i>
<svg style="left:450px;top:435.5px" width="4" height="8" viewBox="0 0 4 8"><path d="M4 0v8L0 4z" fill="#666"/></svg>
<svg style="left:683px;top:435.5px" width="4" height="8" viewBox="0 0 4 8"><path d="M0 0v8l4-4z" fill="#666"/></svg>
<i style="left:1px;top:453px;width:712px;height:22px;background:#f1f1f1;"></i>
<i style="left:1px;top:452.5px;width:712px;height:1.0px;background:#c6c6c6;"></i>
<span class="t" style="left:8.50px;top:457.00px;font-size:11px;line-height:15px;color:#444;letter-spacing:-0.259px;">Ready</span>
<svg style="left:59px;top:457px" width="14" height="14" viewBox="0 0 14 14"><circle cx="3" cy="3" r="3" fill="#777"/><path d="M1.600 7.200v5.200h11v-10" fill="none" stroke="#777" stroke-width="1.100"/><path d="M7 1h6.100v2.500H7z" fill="#777"/><path d="M6 6.500h2M9 6.500h2M3 8.500h2M6 8.500h2M9 8.500h2M3 10.500h2M6 10.500h2M9 10.500h2" stroke="#777" stroke-width="1"/></svg>
<i style="left:410px;top:454px;width:38px;height:21px;background:#c6c6c6;"></i>
<svg style="left:422px;top:457px" width="13" height="13" viewBox="0 0 13 13"><path d="M0.700 0.700h11.600v11.600h-11.600zM4.500 0.500v12M8.500 0.500v12M0.500 4.500h12M0.500 8.500h12" fill="none" stroke="#666" stroke-width="1.300"/></svg>
<svg style="left:460px;top:457px" width="14" height="13" viewBox="0 0 14 13"><path d="M0.700 0.700h12.600v11.600h-12.600z" fill="none" stroke="#666" stroke-width="1.300"/><path d="M3.500 2.500h7v8h-7z" fill="none" stroke="#666"/><path d="M5 4.500h4M5 6.500h4M5 8.500h4" stroke="#666" stroke-width=".9"/></svg>
<svg style="left:498px;top:457px" width="14" height="13" viewBox="0 0 14 13"><path d="M0.700 0.700h12.600v11.600h-12.600z" fill="none" stroke="#666" stroke-width="1.300"/><path d="M0.500 7h8.500M4.700 0.500v6.500M8.700 0.500v6.500" fill="none" stroke="#666" stroke-width="1.200"/></svg>
<i style="left:529px;top:463px;width:6px;height:2px;background:#555;"></i>
<i style="left:539px;top:463px;width:100px;height:1px;background:#8a8a8a;"></i>
<i style="left:589px;top:460px;width:1px;height:7px;background:#8a8a8a;"></i>
<i style="left:596px;top:458px;width:4px;height:11px;background:#555;"></i>
<i style="left:643px;top:463px;width:8px;height:2px;background:#555;"></i>
<i style="left:646px;top:460px;width:2px;height:8px;background:#555;"></i>
<span class="t" style="left:667.00px;top:457.00px;font-size:11px;line-height:15px;color:#444;letter-spacing:-0.535px;">150%</span><div class="bd"></div></div>
<div id="patch"><div class="sh" style="left:6px;top:6px"></div><div class="win" style="left:6px;top:6px"><i style="left:0px;top:0px;width:714px;height:58px;background:#217346;"></i>
<svg style="left:0px;top:0px" width="714" height="58" viewBox="0 0 714 58"><g fill="none" stroke="#1b653c"><circle cx="240" cy="38.500" r="15.500" stroke-width="5"/><path d="M250 48L233 31M232 43V30h13" stroke-width="5.500"/><circle cx="219" cy="16" r="3" stroke-width="3"/><circle cx="287" cy="33.500" r="3.200" stroke-width="3"/><path d="M290.500 33.500H395L412 50H452" stroke-width="4"/><circle cx="494" cy="21" r="27" stroke-width="6.500"/><path d="M480 36L511 5M494 3h19v19" stroke-width="8.500"/><path d="M597 37L609 26H713" stroke-width="3.500"/><path d="M693 0L664 34M708 0L680 34" stroke-width="5" stroke="#1d683e"/></g></svg>
<i style="left:64px;top:34px;width:60px;height:24px;background:#f1f1f1;"></i>
<i style="left:639px;top:35px;width:74px;height:22px;background:#185c37;"></i>
<svg style="left:21px;top:9px" width="14" height="14" viewBox="0 0 14 14"><path d="M1 1h12v12H1z" fill="none" stroke="#fff" stroke-width="2"/><path d="M1 7.300h12V9H1z" fill="#fff"/><path d="M3.800 9h6.400v4H3.800z" fill="#fff"/><path d="M5 10.300h2.300V13H5z" fill="#217346"/></svg>
<svg style="left:63px;top:9px" width="16" height="14" viewBox="0 0 16 14"><path d="M2 4.5h7a4.3 4.3 0 0 1 0 8.4H7.5" fill="none" stroke="#fff" stroke-width="2.3"/><path d="M6.3 0.3L1.8 4.6 6.3 8.9" fill="none" stroke="#fff" stroke-width="2.3"/></svg>
<svg style="left:86.5px;top:13.5px" width="7" height="4" viewBox="0 0 7 4"><path d="M0.80 0.500h5.4L3.500 3.50z" fill="#fff"/></svg>
<svg style="left:108px;top:9px" width="16" height="14" viewBox="0 0 16 14"><path d="M14 4.5H7a4.3 4.3 0 0 0 0 8.4h1.5" fill="none" stroke="#4f9470" stroke-width="2.3"/><path d="M9.7 0.3l4.5 4.3-4.5 4.3" fill="none" stroke="#4f9470" stroke-width="2.3"/></svg>
<svg style="left:130.5px;top:13.5px" width="7" height="4" viewBox="0 0 7 4"><path d="M0.80 0.500h5.4L3.500 3.50z" fill="#5a9a76"/></svg>
<svg style="left:158px;top:12px" width="8" height="8" viewBox="0 0 8 8"><path d="M0.800 0h6.400v1.600h-6.400z" fill="#fff"/><path d="M0.800 3.300h6.400L4 6.800z" fill="#fff"/></svg>
<span class="t" style="left:222.50px;top:11.00px;font-size:12px;line-height:16px;color:#fff;letter-spacing:-0.055px;">MultiDataFrame - Excel (Product Activation Failed)</span>
<svg style="left:545px;top:11.5px" width="14" height="10" viewBox="0 0 14 10"><path d="M0.500 0.500h13v8.500h-13z" fill="none" stroke="#fff"/><path d="M0 0h14v2.200H0z" fill="#fff"/><path d="M7 4v4.500M4.300 6.300l2.700-2.700L9.700 6.300" fill="none" stroke="#fff" stroke-width="1.500"/></svg>
<svg style="left:593px;top:17px" width="9" height="3" viewBox="0 0 9 3"><path d="M0 0h9v2.4H0z" fill="#fff"/></svg>
<svg style="left:638.5px;top:11px" width="11" height="10" viewBox="0 0 11 10"><path d="M0.6 0.6h9v8.6h-9z" fill="none" stroke="#fff" stroke-width="1.2"/><path d="M0 0h10.2v2.6H0z" fill="#fff"/></svg>
<svg style="left:685px;top:11px" width="11" height="11" viewBox="0 0 11 11"><path d="M1 1l9 9M10 1l-9 9" stroke="#fff" stroke-width="2.2" fill="none"/></svg>
<span class="t" style="left:21.00px;top:38.80px;font-size:12px;line-height:16px;color:#fff;letter-spacing:-0.336px;">File</span>
<span class="t" style="left:77.50px;top:38.80px;font-size:12px;line-height:16px;color:#217346;letter-spacing:0.121px;">Home</span>
<span class="t" style="left:139.00px;top:38.80px;font-size:12px;line-height:16px;color:#fff;letter-spacing:-0.086px;">Insert</span>
<span class="t" style="left:197.50px;top:38.80px;font-size:12px;line-height:16px;color:#fff;letter-spacing:-0.263px;">Page Layout</span>
<span class="t" style="left:291.00px;top:38.80px;font-size:12px;line-height:16px;color:#fff;letter-spacing:-0.064px;">Formulas</span>
<span class="t" style="left:370.00px;top:38.80px;font-size:12px;line-height:16px;color:#fff;letter-spacing:-0.590px;">Data</span>
<span class="t" style="left:422.50px;top:38.80px;font-size:12px;line-height:16px;color:#fff;letter-spacing:-0.393px;">Review</span>
<span class="t" style="left:488.50px;top:38.80px;font-size:12px;line-height:16px;color:#fff;letter-spacing:-0.324px;">View</span>
<span class="t" style="left:560.00px;top:38.80px;font-size:12px;line-height:16px;color:#b5d6c3;letter-spacing:-0.202px;">Tell me...</span>
<span class="t" style="left:665.00px;top:38.80px;font-size:12px;line-height:16px;color:#fff;letter-spacing:-0.506px;">Share</span>
<svg style="left:543px;top:38px" width="10" height="13" viewBox="0 0 10 13"><path d="M3.300 9.400C3.100 7.600 0.800 6.700 0.800 4.400a3.900 3.900 0 0 1 7.800 0c0 2.300-2.300 3.200-2.500 5z" fill="none" stroke="#a9cfb9" stroke-width="1.400"/><path d="M3 10.400h3.400M3.300 12.100h2.800" stroke="#a9cfb9" stroke-width="1.200"/></svg>
<svg style="left:646px;top:38px" width="16" height="17" viewBox="0 0 16 17"><circle cx="8" cy="4.6" r="3.9" fill="none" stroke="#fff" stroke-width="1.4"/><path d="M0.8 15.8C1.6 11.4 3.8 9.2 6 8.4" fill="none" stroke="#fff" stroke-width="1.4"/><path d="M7.5 12.9h7.2M11.1 9.3v7.2" stroke="#fff" stroke-width="1.4"/></svg>
<i style="left:1px;top:58px;width:712px;height:92px;background:#f1f1f1;"></i>
<i style="left:1px;top:150px;width:712px;height:1px;background:#d2d2d2;"></i>
<i style="left:86px;top:62px;width:1px;height:85px;background:#d0d0d0;"></i>
<i style="left:225px;top:62px;width:1px;height:85px;background:#d0d0d0;"></i>
<i style="left:364px;top:62px;width:1px;height:85px;background:#d0d0d0;"></i>
<i style="left:415px;top:62px;width:1px;height:85px;background:#d0d0d0;"></i>
<i style="left:585px;top:62px;width:1px;height:85px;background:#d0d0d0;"></i>
<i style="left:629px;top:62px;width:1px;height:85px;background:#d0d0d0;"></i>
<i style="left:673px;top:62px;width:1px;height:85px;background:#d0d0d0;"></i>
<i style="left:173px;top:84px;width:1px;height:22px;background:#d0d0d0;"></i>
<i style="left:129px;top:107px;width:1px;height:22px;background:#d0d0d0;"></i>
<i style="left:278px;top:107px;width:1px;height:22px;background:#d0d0d0;"></i>
<i style="left:320px;top:107px;width:1px;height:22px;background:#d0d0d0;"></i>
<i style="left:5px;top:98px;width:42px;height:32px;background:#c6c6c6;"></i>
<svg style="left:13px;top:66px" width="31" height="32" viewBox="0 0 31 32"><path d="M1 4h24v24H1z" fill="#eac282"/><path d="M6 1.2h14.5V7.5H6z" fill="#666"/><path d="M10.5 0h5.5v3.2h-5.5z" fill="#666"/><path d="M11.6 1.3h3.3v1.7h-3.3z" fill="#f1f1f1"/><path d="M14.7 11h9.8l4.6 4.6v14.6H14.7z" fill="#fff" stroke="#555" stroke-width="1"/><path d="M24.5 11v4.6h4.6" fill="none" stroke="#555" stroke-width="1"/></svg>
<span class="t" style="left:12.00px;top:99.00px;font-size:12px;line-height:16px;color:#444;letter-spacing:-0.438px;">Paste</span>
<svg style="left:22.5px;top:120px" width="7" height="4" viewBox="0 0 7 4"><path d="M0.50 0.500h6L3.500 3.80z" fill="#444"/></svg>
<svg style="left:51px;top:64px" width="14" height="15" viewBox="0 0 14 15"><path d="M3 0.300L10 10.200M11 0.300L4 10.200" stroke="#555" stroke-width="1.900" fill="none"/><circle cx="3" cy="12.300" r="2.100" fill="none" stroke="#3a6ea5" stroke-width="1.300"/><circle cx="11" cy="12.300" r="2.100" fill="none" stroke="#3a6ea5" stroke-width="1.300"/></svg>
<svg style="left:50px;top:88px" width="15" height="14" viewBox="0 0 15 14"><path d="M0.500 0.500h5l2.500 2.500v7h-7.500z" fill="#fff" stroke="#555"/><path d="M2 4.500h3.500M2 6.500h3.500" stroke="#666" stroke-width=".9"/><path d="M6.500 3.500h4.500l3.500 3.500v6.500h-8z" fill="#fff" stroke="#555"/><path d="M8.500 8.500h4M8.500 10.500h4" stroke="#3a6ea5" stroke-width="1"/></svg>
<svg style="left:71.5px;top:93.5px" width="7" height="4" viewBox="0 0 7 4"><path d="M0.50 0.500h6L3.500 3.80z" fill="#666"/></svg>
<svg style="left:50px;top:110px" width="16" height="16" viewBox="0 0 16 16"><path d="M10.2 3.4l3-3 2.2 2.2-3 3z" fill="#555"/><path d="M6.6 4.6l2.2-1.6 4 4-1.6 2.2z" fill="#666"/><path d="M0.4 8l5.8-3 5 5-3.6 5.6C5 13.400 2.600 10.800 0.400 8z" fill="#eac282"/></svg>
<span class="t" style="left:10.50px;top:134.00px;font-size:12px;line-height:16px;color:#666;letter-spacing:-0.153px;">Clipboard</span>
<svg style="left:75px;top:139px" width="7" height="7" viewBox="0 0 7 7"><path d="M0.5 4.5v-4h4" fill="none" stroke="#666"/><path d="M2.6 2.6l3.4 3.4" stroke="#666" stroke-width="1"/><path d="M6.5 3v3.5H3z" fill="#666"/></svg>
<i style="left:91px;top:61px;width:87px;height:23px;background:#fff;border:1px solid #c6c6c6;box-sizing:border-box;"></i>
<i style="left:179px;top:61px;width:43px;height:23px;background:#fff;border:1px solid #c6c6c6;box-sizing:border-box;"></i>
<span class="t" style="left:94.30px;top:65.00px;font-size:12px;line-height:16px;color:#444;letter-spacing:-0.003px;">Arial</span>
<svg style="left:167.5px;top:71.5px" width="7" height="4" viewBox="0 0 7 4"><path d="M0.50 0.500h6L3.500 3.80z" fill="#666"/></svg>
<span class="t" style="left:182.30px;top:65.00px;font-size:12px;line-height:16px;color:#444;letter-spacing:-0.330px;">10</span>
<svg style="left:211.5px;top:71.5px" width="7" height="4" viewBox="0 0 7 4"><path d="M0.50 0.500h6L3.500 3.80z" fill="#666"/></svg>
<span class="t c" style="left:41.50px;width:120px;top:86.50px;font-size:12px;line-height:16px;color:#444;font-weight:bold;">B</span>
<span class="s c" style="left:63.50px;width:120px;top:86.00px;font-size:13px;line-height:17px;color:#444;font-weight:bold;font-style:italic;">I</span>
<span class="t c" style="left:85.50px;width:120px;top:86.50px;font-size:12px;line-height:16px;color:#444;">U</span>
<i style="left:141px;top:100px;width:9px;height:1px;background:#444;"></i>
<svg style="left:159.0px;top:94px" width="7" height="4" viewBox="0 0 7 4"><path d="M0.50 0.500h6L3.500 3.80z" fill="#666"/></svg>
<span class="t c" style="left:129.00px;width:120px;top:87.00px;font-size:14px;line-height:18px;color:#444;">A</span>
<span class="t c" style="left:151.50px;width:120px;top:88.50px;font-size:12px;line-height:16px;color:#444;">A</span>
<svg style="left:191.5px;top:88px" width="6" height="3" viewBox="0 0 6 3"><path d="M0 3h6L3 0z" fill="#3a6ea5"/></svg>
<svg style="left:213.5px;top:88px" width="6" height="3" viewBox="0 0 6 3"><path d="M0 0h6L3 3z" fill="#3a6ea5"/></svg>
<svg style="left:95px;top:111px" width="14" height="15" viewBox="0 0 14 15"><path d="M0 0h1v1h-1zM0 0h1v1h-1zM0 6h1v1h-1zM6 0h1v1h-1zM0 12h1v1h-1zM12 0h1v1h-1zM2 0h1v1h-1zM0 2h1v1h-1zM2 6h1v1h-1zM6 2h1v1h-1zM2 12h1v1h-1zM12 2h1v1h-1zM4 0h1v1h-1zM0 4h1v1h-1zM4 6h1v1h-1zM6 4h1v1h-1zM4 12h1v1h-1zM12 4h1v1h-1zM6 0h1v1h-1zM0 6h1v1h-1zM6 6h1v1h-1zM6 6h1v1h-1zM6 12h1v1h-1zM12 6h1v1h-1zM8 0h1v1h-1zM0 8h1v1h-1zM8 6h1v1h-1zM6 8h1v1h-1zM8 12h1v1h-1zM12 8h1v1h-1zM10 0h1v1h-1zM0 10h1v1h-1zM10 6h1v1h-1zM6 10h1v1h-1zM10 12h1v1h-1zM12 10h1v1h-1zM12 0h1v1h-1zM0 12h1v1h-1zM12 6h1v1h-1zM6 12h1v1h-1zM12 12h1v1h-1zM12 12h1v1h-1z" fill="#777"/><path d="M0 13h14v1.300H0z" fill="#444"/></svg>
<svg style="left:115.5px;top:116px" width="7" height="4" viewBox="0 0 7 4"><path d="M0.50 0.500h6L3.500 3.80z" fill="#666"/></svg>
<svg style="left:138px;top:110px" width="16" height="13" viewBox="0 0 16 13"><path d="M7 1.800L13 6.800 7 11.800 1 6.800z" fill="#fff" stroke="#555" stroke-width="1"/><path d="M4.500 4V1.200a1.400 1.400 0 0 1 2.800 0v4" fill="none" stroke="#555" stroke-width="1"/><path d="M12 4.600c2.300.8 3.500 3 2.600 6.200-1.300-1.400-1.700-3.200-3.400-4.600z" fill="#3a6ea5"/></svg>
<i style="left:137px;top:122px;width:16px;height:4px;background:#fff200;"></i>
<svg style="left:158.0px;top:116px" width="7" height="4" viewBox="0 0 7 4"><path d="M0.50 0.500h6L3.500 3.80z" fill="#666"/></svg>
<span class="t c" style="left:119.20px;width:120px;top:108.00px;font-size:13px;line-height:17px;color:#444;-webkit-text-stroke:.3px #444;">A</span>
<i style="left:171px;top:122px;width:16px;height:4px;background:#ee0a0a;"></i>
<svg style="left:192.0px;top:116px" width="7" height="4" viewBox="0 0 7 4"><path d="M0.50 0.500h6L3.500 3.80z" fill="#666"/></svg>
<span class="t" style="left:137.00px;top:134.00px;font-size:12px;line-height:16px;color:#666;letter-spacing:-0.254px;">Font</span>
<svg style="left:215px;top:139px" width="7" height="7" viewBox="0 0 7 7"><path d="M0.5 4.5v-4h4" fill="none" stroke="#666"/><path d="M2.6 2.6l3.4 3.4" stroke="#666" stroke-width="1"/><path d="M6.5 3v3.5H3z" fill="#666"/></svg>
<i style="left:275px;top:61px;width:22px;height:23px;background:#c6c6c6;"></i>
<svg style="left:235px;top:64px" width="14" height="17" viewBox="0 0 14 17"><path d="M0 0.5h14" stroke="#666" stroke-width="1.100"/><path d="M1 3.5h12" stroke="#666" stroke-width="1.100"/><path d="M0 6.5h14" stroke="#666" stroke-width="1.100"/></svg>
<svg style="left:257px;top:64px" width="14" height="17" viewBox="0 0 14 17"><path d="M0 4.5h14" stroke="#666" stroke-width="1.100"/><path d="M1 7.5h12" stroke="#666" stroke-width="1.100"/><path d="M0 10.5h14" stroke="#666" stroke-width="1.100"/></svg>
<svg style="left:279px;top:64px" width="14" height="17" viewBox="0 0 14 17"><path d="M0 9.5h14" stroke="#666" stroke-width="1.100"/><path d="M1 12.5h12" stroke="#666" stroke-width="1.100"/><path d="M0 15.5h14" stroke="#666" stroke-width="1.100"/></svg>
<svg style="left:303px;top:64px" width="17" height="16" viewBox="0 0 17 16"><path d="M0.500 0.500h9v4h-9z" fill="#fff" stroke="#666"/><path d="M2 2.500h12" stroke="#3a6ea5" stroke-width="1"/><path d="M0.500 7.500h9v7h-9z" fill="#fff" stroke="#666"/><path d="M2 9.500h6M2 11.500h6" stroke="#3a6ea5" stroke-width="1"/><path d="M15.300 4.500c.4 2.600-1.400 3.900-4.300 3.900" fill="none" stroke="#3a6ea5" stroke-width="1.100"/><path d="M12.700 6.300L10.500 8.400l2.200 2.100" fill="none" stroke="#3a6ea5" stroke-width="1.100"/></svg>
<svg style="left:235px;top:88px" width="14" height="14" viewBox="0 0 14 14"><path d="M0 2.5h14" stroke="#666" stroke-width="1.1"/><path d="M0 5.5h10" stroke="#666" stroke-width="1.1"/><path d="M0 8.5h14" stroke="#666" stroke-width="1.1"/><path d="M0 11.5h10" stroke="#666" stroke-width="1.1"/></svg>
<svg style="left:257px;top:88px" width="14" height="14" viewBox="0 0 14 14"><path d="M0 2.5h14" stroke="#666" stroke-width="1.1"/><path d="M2 5.5h10" stroke="#666" stroke-width="1.1"/><path d="M0 8.5h14" stroke="#666" stroke-width="1.1"/><path d="M2 11.5h10" stroke="#666" stroke-width="1.1"/></svg>
<svg style="left:279px;top:88px" width="14" height="14" viewBox="0 0 14 14"><path d="M0 2.5h14" stroke="#666" stroke-width="1.1"/><path d="M4 5.5h10" stroke="#666" stroke-width="1.1"/><path d="M0 8.5h14" stroke="#666" stroke-width="1.1"/><path d="M4 11.5h10" stroke="#666" stroke-width="1.1"/></svg>
<svg style="left:303px;top:87px" width="16" height="16" viewBox="0 0 16 16"><path d="M0.500 0.500h14v14h-14z" fill="#fff" stroke="#666"/><path d="M0.500 3.500h14M0.500 11.500h14M7.500 0.500v3M7.500 11.500v3" stroke="#666" fill="none"/><path d="M2.500 7.500h10.200M4.300 5.700L2.500 7.500l1.800 1.800M10.900 5.700L12.700 7.500l-1.800 1.800" fill="none" stroke="#3a6ea5" stroke-width="1.100"/></svg>
<svg style="left:324.0px;top:94px" width="7" height="4" viewBox="0 0 7 4"><path d="M0.50 0.500h6L3.500 3.80z" fill="#666"/></svg>
<svg style="left:234px;top:111px" width="16" height="14" viewBox="0 0 16 14"><path d="M0 0.500h16M0 12.500h16M8 3.500h8M8 6.500h8M8 9.500h8" stroke="#666" stroke-width="1.1"/><path d="M0.800 6.500h6M3.400 3.800L0.800 6.500l2.600 2.700" fill="none" stroke="#3a6ea5" stroke-width="1.6"/></svg>
<svg style="left:256px;top:111px" width="16" height="14" viewBox="0 0 16 14"><path d="M0 0.500h16M0 12.500h16M8 3.500h8M8 6.500h8M8 9.500h8" stroke="#666" stroke-width="1.1"/><path d="M0.400 6.500h6M3.800 3.800L6.400 6.500 3.800 9.200" fill="none" stroke="#3a6ea5" stroke-width="1.6"/></svg>
<svg style="left:287px;top:111px" width="18" height="16" viewBox="0 0 18 16"><text x="0" y="0" transform="translate(4.200 11.500) rotate(-45)" font-family="Liberation Sans,sans-serif" font-size="10.500" fill="#444">ab</text><path d="M6.500 13.800L15.500 4.800" stroke="#555" stroke-width="1.400"/><path d="M12 4.300h4v4" fill="none" stroke="#555" stroke-width="1.400"/></svg>
<svg style="left:306.5px;top:116.5px" width="7" height="4" viewBox="0 0 7 4"><path d="M0.50 0.500h6L3.500 3.80z" fill="#666"/></svg>
<svg style="left:331px;top:113px" width="13" height="11" viewBox="0 0 13 11"><path d="M0 0.500l3.600 3.700L0 8z" fill="#3a6ea5"/><text x="4.200" y="8.600" font-family="Liberation Sans,sans-serif" font-size="11" font-weight="bold" fill="#666">¶</text></svg>
<svg style="left:350.5px;top:116.5px" width="7" height="4" viewBox="0 0 7 4"><path d="M0.50 0.500h6L3.500 3.80z" fill="#666"/></svg>
<span class="t" style="left:261.00px;top:134.00px;font-size:12px;line-height:16px;color:#666;letter-spacing:-0.042px;">Alignment</span>
<svg style="left:353px;top:139px" width="7" height="7" viewBox="0 0 7 7"><path d="M0.5 4.5v-4h4" fill="none" stroke="#666"/><path d="M2.6 2.6l3.4 3.4" stroke="#666" stroke-width="1"/><path d="M6.5 3v3.5H3z" fill="#666"/></svg>
<i style="left:374px;top:62px;width:30px;height:30px;background:#fff;border:1px solid #d4d4d4;box-sizing:border-box;"></i>
<span class="t c" style="left:330.00px;width:120px;top:68.50px;font-size:14px;line-height:18px;color:#444;">%</span>
<span class="t" style="left:368.50px;top:97.50px;font-size:12px;line-height:16px;color:#444;letter-spacing:0.219px;">Number</span>
<svg style="left:387.0px;top:118.5px" width="7" height="4" viewBox="0 0 7 4"><path d="M0.50 0.500h6L3.500 3.80z" fill="#666"/></svg>
<svg style="left:423px;top:65px" width="16" height="16" viewBox="0 0 16 16"><path d="M0.500 0.500h13v11h-13z" fill="#fff" stroke="#888"/><path d="M0.500 0.500h6v3.700h-6z" fill="#c8502f"/><path d="M0.500 4.200h4v3.600h-4z" fill="#3a6ea5"/><path d="M0.500 7.800h4v3.700h-4z" fill="#c8502f"/><path d="M7 0.500v4M0.500 4.200h13" stroke="#888" stroke-width=".8" fill="none"/><path d="M6.500 6.500h9v8.500h-9z" fill="#fff" stroke="#555"/><path d="M8.500 9.500h5M8.500 12h5M12.500 8l-3 5.500" stroke="#444" stroke-width=".9" fill="none"/></svg>
<svg style="left:423px;top:88px" width="18" height="16" viewBox="0 0 18 16"><path d="M0.500 0.500h15v11.500h-15z" fill="#fff" stroke="#aaa"/><path d="M5.500 4.300h5v7.700h-5zM10.500 4.300h5v3.900h-5z" fill="#b9cde5"/><path d="M0.500 4.300h15M0.500 8.200h15M5.500 0.500v11.500M10.500 0.500v11.500" stroke="#aaa" stroke-width=".9" fill="none"/><path d="M0.500 12V0.500H15.500" fill="none" stroke="#666" stroke-width="1"/><path d="M16.200 1.100L17 4 13.200 9.600 10.600 7.400z" fill="#666" stroke="#f1f1f1" stroke-width=".7"/><path d="M10.700 7.600L13.500 10C12.200 13.600 8 15.600 3.500 15.700 6.500 14 7.400 9.400 10.700 7.600z" fill="#3a6ea5" stroke="#f1f1f1" stroke-width=".5"/><path d="M8.500 13.300c1-.6 1.700-1.400 2.100-2.400" stroke="#cfe0f2" stroke-width=".8" fill="none"/></svg>
<svg style="left:423px;top:111px" width="18" height="16" viewBox="0 0 18 16"><path d="M0.500 0.500h15v11.500h-15z" fill="#fff" stroke="#aaa"/><path d="M3.500 3h8.500v6.500H3.500z" fill="#b9cde5"/><path d="M0.500 4.300h15M0.500 8.200h15M5.500 0.500v11.500M10.500 0.500v11.500" stroke="#aaa" stroke-width=".9" fill="none"/><path d="M0.500 12V0.500H15.500" fill="none" stroke="#666" stroke-width="1"/><path d="M16.200 1.100L17 4 13.200 9.600 10.600 7.400z" fill="#666" stroke="#f1f1f1" stroke-width=".7"/><path d="M10.700 7.600L13.500 10C12.200 13.600 8 15.600 3.500 15.700 6.500 14 7.400 9.400 10.700 7.600z" fill="#3a6ea5" stroke="#f1f1f1" stroke-width=".5"/><path d="M8.500 13.300c1-.6 1.700-1.400 2.100-2.400" stroke="#cfe0f2" stroke-width=".8" fill="none"/></svg>
<span class="t" style="left:443.00px;top:64.50px;font-size:12px;line-height:16px;color:#444;letter-spacing:0.103px;">Conditional Formatting</span>
<svg style="left:568.5px;top:71px" width="7" height="4" viewBox="0 0 7 4"><path d="M0.50 0.500h6L3.500 3.80z" fill="#666"/></svg>
<span class="t" style="left:443.00px;top:87.50px;font-size:12px;line-height:16px;color:#444;letter-spacing:-0.289px;">Format as Table</span>
<svg style="left:526.5px;top:94px" width="7" height="4" viewBox="0 0 7 4"><path d="M0.50 0.500h6L3.500 3.80z" fill="#666"/></svg>
<span class="t" style="left:443.00px;top:111.00px;font-size:12px;line-height:16px;color:#444;letter-spacing:-0.426px;">Cell Styles</span>
<svg style="left:496.5px;top:116.5px" width="7" height="4" viewBox="0 0 7 4"><path d="M0.50 0.500h6L3.500 3.80z" fill="#666"/></svg>
<span class="t" style="left:486.50px;top:134.00px;font-size:12px;line-height:16px;color:#666;letter-spacing:-0.698px;">Styles</span>
<i style="left:592px;top:62px;width:30px;height:30px;background:#fff;border:1px solid #d4d4d4;box-sizing:border-box;"></i>
<svg style="left:600px;top:68px" width="15" height="17" viewBox="0 0 15 17"><path d="M0.500 0.500v4M13.500 0.500v4M1 2.500h12M3.300 0.800L1.500 2.500l1.800 1.700M10.700 0.800L12.500 2.500l-1.800 1.700" fill="none" stroke="#3a6ea5" stroke-width="1"/><path d="M0.500 5.500h14v9h-14z" fill="#fff" stroke="#777"/><path d="M0.500 8.500h14M0.500 11.500h14M4.500 5.500v9M9.500 5.500v9M12.500 5.500v9" stroke="#999" stroke-width=".8" fill="none"/><path d="M4.500 7.500h5v4h-5z" fill="#3a6ea5"/><path d="M1 15.700h5.500v-1M7.500 14.700v1h6" stroke="#777" stroke-width="1" fill="none"/></svg>
<span class="t" style="left:595.50px;top:97.50px;font-size:12px;line-height:16px;color:#444;letter-spacing:-0.334px;">Cells</span>
<svg style="left:604.5px;top:118.5px" width="7" height="4" viewBox="0 0 7 4"><path d="M0.50 0.500h6L3.500 3.80z" fill="#666"/></svg>
<i style="left:636px;top:62px;width:30px;height:30px;background:#fff;border:1px solid #d4d4d4;box-sizing:border-box;"></i>
<svg style="left:644px;top:70px" width="14" height="13" viewBox="0 0 14 13"><circle cx="9.300" cy="4.700" r="3.900" fill="#fff" stroke="#3a6ea5" stroke-width="1.600"/><path d="M6.300 7.700L0.900 12.200" stroke="#3a6ea5" stroke-width="2.200"/></svg>
<span class="t" style="left:633.50px;top:97.50px;font-size:12px;line-height:16px;color:#444;letter-spacing:0.042px;">Editing</span>
<svg style="left:648.0px;top:118.5px" width="7" height="4" viewBox="0 0 7 4"><path d="M0.50 0.500h6L3.500 3.80z" fill="#666"/></svg>
<svg style="left:694px;top:139px" width="9" height="6" viewBox="0 0 9 6"><path d="M0.700 5.300L4.500 1.400 8.300 5.300" fill="none" stroke="#666" stroke-width="1.600"/></svg>
<i style="left:1px;top:151px;width:712px;height:46px;background:#e6e6e6;"></i>
<i style="left:6px;top:161px;width:102px;height:26px;background:#fff;border:1px solid #c8c8c8;box-sizing:border-box;"></i>
<span class="t" style="left:13.00px;top:166.25px;font-size:12.5px;line-height:16.5px;color:#444;letter-spacing:0.352px;">A1</span>
<svg style="left:94.0px;top:171px" width="7" height="4" viewBox="0 0 7 4"><path d="M0.50 0.500h6L3.500 3.80z" fill="#777"/></svg>
<svg style="left:122px;top:169.5px" width="2" height="10" viewBox="0 0 2 10"><path d="M0 0h2v2H0zM0 4h2v2H0zM0 8h2v2H0z" fill="#b0b0b0"/></svg>
<i style="left:138px;top:161px;width:110px;height:26px;background:#fff;border:1px solid #c8c8c8;box-sizing:border-box;"></i>
<svg style="left:151.5px;top:169.5px" width="11" height="10" viewBox="0 0 11 10"><path d="M0.800 0.500l9.400 9M10.200 0.500L0.800 9.500" stroke="#b5b5b5" stroke-width="1.500" fill="none"/></svg>
<svg style="left:187px;top:169px" width="14" height="11" viewBox="0 0 14 11"><path d="M1 5.800l3.800 3.700L12.500 1" stroke="#c2c2c2" stroke-width="2.200" fill="none"/></svg>
<svg style="left:222px;top:166px" width="15" height="17" viewBox="0 0 15 17"><text x="1.500" y="12" font-family="Liberation Serif,serif" font-style="italic" font-weight="bold" font-size="15" fill="#555">f</text><text x="7.200" y="12.500" font-family="Liberation Serif,serif" font-style="italic" font-weight="bold" font-size="9.500" fill="#555">x</text></svg>
<i style="left:251px;top:161px;width:457px;height:26px;background:#fff;border:1px solid #c8c8c8;box-sizing:border-box;"></i>
<span class="t" style="left:264.00px;top:166.00px;font-size:12px;line-height:16px;color:#444;letter-spacing:0.663px;">Product</span>
<svg style="left:694px;top:170px" width="8" height="6" viewBox="0 0 8 6"><path d="M0.700 0.800L4 4.300 7.300 0.800" fill="none" stroke="#666" stroke-width="1.500"/></svg>
<i style="left:1px;top:197px;width:712px;height:228px;background:#e6e6e6;"></i>
<i style="left:41px;top:221px;width:651px;height:204px;background:#fff;"></i>
<i style="left:40px;top:197px;width:97px;height:24px;background:#d2d2d2;"></i>
<i style="left:1px;top:221px;width:39px;height:26px;background:#d2d2d2;"></i>
<svg style="left:20.5px;top:201.5px" width="16.5" height="16.5" viewBox="0 0 16.5 16.5"><path d="M16.500 0v16.500H0z" fill="#b4b4b4"/></svg>
<span class="a c" style="left:28.50px;width:120px;top:198.00px;font-size:20px;line-height:24px;color:#217346;">A</span>
<span class="a c" style="left:124.50px;width:120px;top:198.00px;font-size:20px;line-height:24px;color:#222;">B</span>
<span class="a c" style="left:220.50px;width:120px;top:198.00px;font-size:20px;line-height:24px;color:#222;">C</span>
<span class="a c" style="left:316.50px;width:120px;top:198.00px;font-size:20px;line-height:24px;color:#222;">D</span>
<span class="a c" style="left:412.50px;width:120px;top:198.00px;font-size:20px;line-height:24px;color:#222;">E</span>
<span class="a c" style="left:508.50px;width:120px;top:198.00px;font-size:20px;line-height:24px;color:#222;">F</span>
<span class="a c" style="left:604.50px;width:120px;top:198.00px;font-size:20px;line-height:24px;color:#222;">G</span>
<span class="a c" style="left:-39.20px;width:120px;top:222.50px;font-size:20px;line-height:24px;color:#217346;">1</span>
<span class="a c" style="left:-39.20px;width:120px;top:248.50px;font-size:20px;line-height:24px;color:#222;">2</span>
<span class="a c" style="left:-39.20px;width:120px;top:274.50px;font-size:20px;line-height:24px;color:#222;">3</span>
<span class="a c" style="left:-39.20px;width:120px;top:300.50px;font-size:20px;line-height:24px;color:#222;">4</span>
<span class="a c" style="left:-39.20px;width:120px;top:326.50px;font-size:20px;line-height:24px;color:#222;">5</span>
<span class="a c" style="left:-39.20px;width:120px;top:352.50px;font-size:20px;line-height:24px;color:#222;">6</span>
<span class="a c" style="left:-39.20px;width:120px;top:378.50px;font-size:20px;line-height:24px;color:#222;">7</span>
<span class="a c" style="left:-39.20px;width:120px;top:404.50px;font-size:20px;line-height:24px;color:#222;">8</span>
<i style="left:40px;top:221px;width:1px;height:204px;background:#d4d4d4;"></i>
<i style="left:40px;top:198px;width:1px;height:23px;background:#ababab;"></i>
<i style="left:136px;top:221px;width:1px;height:204px;background:#d4d4d4;"></i>
<i style="left:136px;top:198px;width:1px;height:23px;background:linear-gradient(#dcdcdc,#a6a6a6);"></i>
<i style="left:232px;top:221px;width:1px;height:204px;background:#d4d4d4;"></i>
<i style="left:232px;top:198px;width:1px;height:23px;background:linear-gradient(#dcdcdc,#a6a6a6);"></i>
<i style="left:328px;top:221px;width:1px;height:204px;background:#d4d4d4;"></i>
<i style="left:328px;top:198px;width:1px;height:23px;background:linear-gradient(#dcdcdc,#a6a6a6);"></i>
<i style="left:424px;top:221px;width:1px;height:204px;background:#d4d4d4;"></i>
<i style="left:424px;top:198px;width:1px;height:23px;background:linear-gradient(#dcdcdc,#a6a6a6);"></i>
<i style="left:520px;top:221px;width:1px;height:204px;background:#d4d4d4;"></i>
<i style="left:520px;top:198px;width:1px;height:23px;background:linear-gradient(#dcdcdc,#a6a6a6);"></i>
<i style="left:616px;top:221px;width:1px;height:204px;background:#d4d4d4;"></i>
<i style="left:616px;top:198px;width:1px;height:23px;background:linear-gradient(#dcdcdc,#a6a6a6);"></i>
<i style="left:41px;top:247px;width:651px;height:1px;background:#d4d4d4;"></i>
<i style="left:1px;top:247px;width:39px;height:1px;background:#ababab;"></i>
<i style="left:41px;top:273px;width:651px;height:1px;background:#d4d4d4;"></i>
<i style="left:1px;top:273px;width:39px;height:1px;background:#ababab;"></i>
<i style="left:41px;top:299px;width:651px;height:1px;background:#d4d4d4;"></i>
<i style="left:1px;top:299px;width:39px;height:1px;background:#ababab;"></i>
<i style="left:41px;top:325px;width:651px;height:1px;background:#d4d4d4;"></i>
<i style="left:1px;top:325px;width:39px;height:1px;background:#ababab;"></i>
<i style="left:41px;top:351px;width:651px;height:1px;background:#d4d4d4;"></i>
<i style="left:1px;top:351px;width:39px;height:1px;background:#ababab;"></i>
<i style="left:41px;top:377px;width:651px;height:1px;background:#d4d4d4;"></i>
<i style="left:1px;top:377px;width:39px;height:1px;background:#ababab;"></i>
<i style="left:41px;top:403px;width:651px;height:1px;background:#d4d4d4;"></i>
<i style="left:1px;top:403px;width:39px;height:1px;background:#ababab;"></i>
<i style="left:1px;top:220.5px;width:691px;height:1.0px;background:#9e9e9e;"></i>
<i style="left:40px;top:221px;width:1px;height:204px;background:#9e9e9e;"></i>
<i style="left:691px;top:221px;width:1px;height:204px;background:#9e9e9e;"></i>
<span class="a" style="left:44.50px;top:223.00px;font-size:20px;line-height:24px;color:#000;letter-spacing:-0.134px;">Product</span>
<span class="a" style="left:140.50px;top:223.00px;font-size:20px;line-height:24px;color:#000;letter-spacing:-0.316px;">Price</span>
<span class="a" style="left:44.50px;top:249.00px;font-size:20px;line-height:24px;color:#000;letter-spacing:-0.398px;">Book</span>
<span class="a" style="left:191.50px;top:249.00px;font-size:20px;line-height:24px;color:#000;letter-spacing:-0.234px;">10.5</span>
<span class="a" style="left:44.50px;top:275.00px;font-size:20px;line-height:24px;color:#000;letter-spacing:-0.531px;">Pen</span>
<span class="a" style="left:191.50px;top:275.00px;font-size:20px;line-height:24px;color:#000;letter-spacing:-0.234px;">1.99</span>
<i style="left:39px;top:220px;width:99px;height:29px;border:2px solid #217346;box-sizing:border-box;"></i>
<i style="left:133px;top:244px;width:6px;height:6px;background:#fff;"></i>
<i style="left:134px;top:245px;width:5px;height:5px;background:#217346;"></i>
<i style="left:695px;top:199px;width:15px;height:226px;background:#dadada;"></i>
<i style="left:695px;top:199px;width:15px;height:15px;background:#fff;border:1px solid #ababab;box-sizing:border-box;"></i>
<i style="left:695px;top:214px;width:15px;height:68px;background:#fff;border:1px solid #ababab;border-top:0;box-sizing:border-box;"></i>
<i style="left:695px;top:412px;width:15px;height:13px;background:#fff;border:1px solid #ababab;box-sizing:border-box;"></i>
<svg style="left:699px;top:204px" width="7" height="4" viewBox="0 0 7 4"><path d="M0 4h7L3.500 0z" fill="#666"/></svg>
<svg style="left:699px;top:417px" width="7" height="4" viewBox="0 0 7 4"><path d="M0 0h7L3.500 4z" fill="#666"/></svg>
<i style="left:1px;top:425px;width:712px;height:28px;background:#e6e6e6;"></i>
<i style="left:1px;top:424.5px;width:691.5px;height:1.0px;background:#9e9e9e;"></i>
<svg style="left:28px;top:434px" width="4" height="8" viewBox="0 0 4 8"><path d="M4 0v8L0 4z" fill="#c0c0c0"/></svg>
<svg style="left:56px;top:434px" width="4" height="8" viewBox="0 0 4 8"><path d="M0 0v8l4-4z" fill="#c0c0c0"/></svg>
<i style="left:101px;top:429px;width:1px;height:20px;background:#ababab;"></i>
<span class="t" style="left:114.00px;top:430.00px;font-size:12px;line-height:16px;color:#444;letter-spacing:-0.008px;">Sheet1</span>
<span class="t" style="left:179.50px;top:430.00px;font-size:12px;line-height:16px;color:#444;letter-spacing:0.354px;">People</span>
<i style="left:233px;top:425px;width:77px;height:23px;background:#fff;border-left:1px solid #ababab;border-right:1px solid #ababab;box-sizing:border-box;"></i>
<i style="left:233px;top:448px;width:77px;height:2px;background:#217346;"></i>
<span class="t" style="left:244.20px;top:430.00px;font-size:12px;line-height:16px;color:#217346;font-weight:bold;letter-spacing:0.248px;">Products</span>
<i style="left:166px;top:429px;width:1px;height:20px;background:#ababab;"></i>
<svg style="left:342px;top:430px" width="17" height="17" viewBox="0 0 17 17"><circle cx="8.500" cy="8.500" r="7.700" fill="none" stroke="#666" stroke-width="1.100"/><path d="M4.500 8.500h8M8.500 4.500v8" stroke="#555" stroke-width="1.600"/></svg>
<svg style="left:428px;top:434px" width="2" height="10" viewBox="0 0 2 10"><path d="M0 0h2v2H0zM0 4h2v2H0zM0 8h2v2H0z" fill="#b0b0b0"/></svg>
<i style="left:445px;top:432px;width:15px;height:15px;background:#fff;border:1px solid #ababab;box-sizing:border-box;"></i>
<i style="left:460px;top:432px;width:162px;height:15px;background:#fff;border:1px solid #ababab;border-left:0;box-sizing:border-box;"></i>
<i style="left:622px;top:432px;width:56px;height:15px;background:#d9d9d9;"></i>
<i style="left:677px;top:432px;width:15px;height:15px;background:#fff;border:1px solid #ababab;box-sizing:border-box;"></i>
<svg style="left:450px;top:435.5px" width="4" height="8" viewBox="0 0 4 8"><path d="M4 0v8L0 4z" fill="#666"/></svg>
<svg style="left:683px;top:435.5px" width="4" height="8" viewBox="0 0 4 8"><path d="M0 0v8l4-4z" fill="#666"/></svg>
<i style="left:1px;top:453px;width:712px;height:22px;background:#f1f1f1;"></i>
<i style="left:1px;top:452.5px;width:712px;height:1.0px;background:#c6c6c6;"></i>
<span class="t" style="left:8.50px;top:457.00px;font-size:11px;line-height:15px;color:#444;letter-spacing:-0.259px;">Ready</span>
<svg style="left:59px;top:457px" width="14" height="14" viewBox="0 0 14 14"><circle cx="3" cy="3" r="3" fill="#777"/><path d="M1.600 7.200v5.200h11v-10" fill="none" stroke="#777" stroke-width="1.100"/><path d="M7 1h6.100v2.500H7z" fill="#777"/><path d="M6 6.500h2M9 6.500h2M3 8.500h2M6 8.500h2M9 8.500h2M3 10.500h2M6 10.500h2M9 10.500h2" stroke="#777" stroke-width="1"/></svg>
<i style="left:410px;top:454px;width:38px;height:21px;background:#c6c6c6;"></i>
<svg style="left:422px;top:457px" width="13" height="13" viewBox="0 0 13 13"><path d="M0.700 0.700h11.600v11.600h-11.600zM4.500 0.500v12M8.500 0.500v12M0.500 4.500h12M0.500 8.500h12" fill="none" stroke="#666" stroke-width="1.300"/></svg>
<svg style="left:460px;top:457px" width="14" height="13" viewBox="0 0 14 13"><path d="M0.700 0.700h12.600v11.600h-12.600z" fill="none" stroke="#666" stroke-width="1.300"/><path d="M3.500 2.500h7v8h-7z" fill="none" stroke="#666"/><path d="M5 4.500h4M5 6.500h4M5 8.500h4" stroke="#666" stroke-width=".9"/></svg>
<svg style="left:498px;top:457px" width="14" height="13" viewBox="0 0 14 13"><path d="M0.700 0.700h12.600v11.600h-12.600z" fill="none" stroke="#666" stroke-width="1.300"/><path d="M0.500 7h8.500M4.700 0.500v6.500M8.700 0.500v6.500" fill="none" stroke="#666" stroke-width="1.200"/></svg>
<i style="left:529px;top:463px;width:6px;height:2px;background:#555;"></i>
<i style="left:539px;top:463px;width:100px;height:1px;background:#8a8a8a;"></i>
<i style="left:589px;top:460px;width:1px;height:7px;background:#8a8a8a;"></i>
<i style="left:596px;top:458px;width:4px;height:11px;background:#555;"></i>
<i style="left:643px;top:463px;width:8px;height:2px;background:#555;"></i>
<i style="left:646px;top:460px;width:2px;height:8px;background:#555;"></i>
<span class="t" style="left:667.00px;top:457.00px;font-size:11px;line-height:15px;color:#444;letter-spacing:-0.535px;">150%</span><div class="bd"></div></div></div>
</body></html>
